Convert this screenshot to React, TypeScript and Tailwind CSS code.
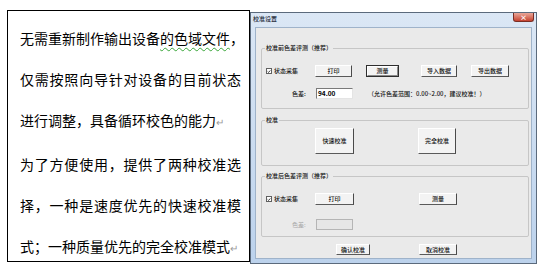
import React from 'react';

const cjk = "font-['Noto_Sans_CJK_SC','Noto_Sans',sans-serif]";

function Btn({ label, w, h = 12, ml = 0, isDefault = false }: { label: string; w: number; h?: number; ml?: number; isDefault?: boolean }) {
  const size = { width: w, height: h, marginLeft: ml };
  if (isDefault) {
    return (
      <div style={size} className="shrink-0 border border-[#2e2e2e] bg-[#f3f3f3]">
        <div className="flex h-full w-full items-center justify-center border border-white border-r-[#8a8a8a] border-b-[#8a8a8a] text-[6px] font-medium leading-none text-[#111]">
          {label}
        </div>
      </div>
    );
  }
  return (
    <div
      style={size}
      className="flex shrink-0 items-center justify-center border border-t-white border-l-white border-r-[#4a4a4a] border-b-[#5a5a5a] bg-[#f3f3f3] text-[6px] font-medium leading-none text-[#111]"
    >
      {label}
    </div>
  );
}

function Check() {
  return (
    <div className="flex items-center">
      <div className="ml-[4px] flex h-[6px] w-[6px] items-center justify-center border border-[#606060] bg-white">
        <svg viewBox="0 0 6 6" className="h-[5px] w-[5px]">
          <path d="M1 3 L2.4 4.4 L5 1.4" fill="none" stroke="#111" strokeWidth={1.2} />
        </svg>
      </div>
      <span className="ml-[2px] w-[41px] text-[6px] font-medium leading-none text-[#111]">状态采集</span>
    </div>
  );
}

function Group({ title, h, mt, children }: { title: string; h: number; mt: number; children: React.ReactNode }) {
  return (
    <fieldset
      style={{ height: h, marginTop: mt }}
      className="ml-[5px] w-[268px] rounded-[2px] border border-[#c6c6c6]"
    >
      <legend className="ml-[3px] px-[1px] text-[6px] font-medium leading-[8px] text-[#111]">{title}</legend>
      {children}
    </fieldset>
  );
}

function Dialog() {
  return (
    <div className={`mt-[12px] flex h-[252px] w-[287px] flex-col border border-[#5b6a7c] bg-gradient-to-b from-[#dbe7f5] to-[#bcd2ec] ${cjk}`}>
      {/* Title bar */}
      <div className="flex h-[14px] shrink-0 items-start justify-between">
        <span className="ml-[2px] mt-[3px] text-[6px] font-medium leading-none text-[#1e2a38]">校准设置</span>
        <div className="mr-[2px] flex h-[9px] w-[21px] items-center justify-center rounded-b-[3px] border border-t-0 border-[#7a2d24] bg-gradient-to-b from-[#e9a699] to-[#c5402f] text-[7px] font-bold leading-none text-white">
          ×
        </div>
      </div>

      {/* Client area */}
      <div className="mx-[4px] h-[232px] w-[277px] border border-[#9fb3ca] bg-[#eaeaea]">
        <Group title="校准前色差评测（推荐）" h={65} mt={16}>
          <div className="mt-[13px] flex h-[12px] items-center">
            <Check />
            <Btn label="打印" w={37} />
            <Btn label="测量" w={33} ml={14} isDefault />
            <Btn label="导入数据" w={36} ml={22} />
            <Btn label="导出数据" w={38} ml={14} />
          </div>
          <div className="mt-[11px] flex h-[11px] items-center">
            <span className="ml-[30px] w-[24px] text-[6px] font-medium leading-none text-[#111]">色差:</span>
            <div className="flex h-[11px] w-[37px] items-center border border-t-[#7a7a7a] border-l-[#7a7a7a] border-r-[#e4e4e4] border-b-[#e4e4e4] bg-white pl-[1px] text-[6.5px] font-bold leading-none text-black">
              94.00
            </div>
            <span className="ml-[15px] text-[6px] font-medium leading-none text-[#111]">（允许色差范围：0.00~2.00，建议校准！）</span>
          </div>
        </Group>

        <Group title="校准" h={50} mt={7}>
          <div className="mt-[4px] flex">
            <Btn label="快速校准" w={39} h={26} ml={53} />
            <Btn label="完全校准" w={38} h={26} ml={64} />
          </div>
        </Group>

        <Group title="校准后色差评测（推荐）" h={65} mt={6}>
          <div className="mt-[13px] flex h-[12px] items-center">
            <Check />
            <Btn label="打印" w={39} />
            <Btn label="测量" w={38} ml={65} />
          </div>
          <div className="mt-[14px] flex h-[11px] items-center">
            <span className="ml-[30px] w-[24px] text-[6px] leading-none text-[#a8a8a8]">色差:</span>
            <div className="h-[11px] w-[37px] border border-[#b5b5b5] bg-[#e6e6e6]" />
          </div>
        </Group>

        <div className="mt-[7px] flex">
          <Btn label="确认校准" w={34} h={11} ml={80} />
          <Btn label="取消校准" w={38} h={11} ml={49} />
        </div>
      </div>
    </div>
  );
}

export default function App() {
  const spread = { letterSpacing: '0.79px' };
  return (
    <div className={`flex h-[268px] w-[544px] overflow-hidden bg-white ${cjk}`}>
      <div className="ml-[7px] mt-[10px] h-[252px] w-[243px] shrink-0 border border-black pl-[12px] pt-[7px] text-[14px] leading-[41px] text-black">
        <div className="whitespace-nowrap">
          无需重新制作输出设备
          <span className="underline decoration-[#3aa63a] decoration-wavy decoration-1 underline-offset-[3px]">的色域文件</span>，
        </div>
        <div className="whitespace-nowrap" style={spread}>仅需按照向导针对设备的目前状态</div>
        <div className="whitespace-nowrap">
          进行调整，具备循环校色的能力<span className="text-[10px] text-[#9a9a9a]">↵</span>
        </div>
        <div className="mt-[2px] whitespace-nowrap" style={spread}>为了方便使用，提供了两种校准选</div>
        <div className="whitespace-nowrap" style={spread}>择，一种是速度优先的快速校准模</div>
        <div className="whitespace-nowrap">
          式；一种质量优先的完全校准模式<span className="text-[10px] text-[#9a9a9a]">↵</span>
        </div>
      </div>
      <Dialog />
    </div>
  );
}
